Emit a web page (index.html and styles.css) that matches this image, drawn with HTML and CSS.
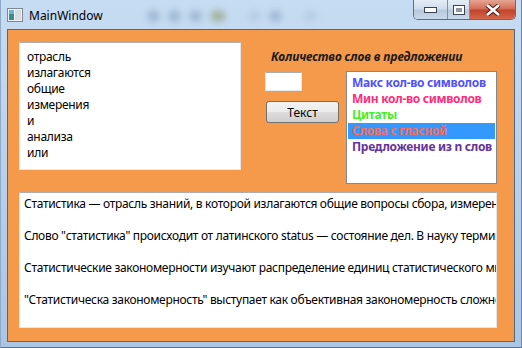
FILE: index.html
```html
<!DOCTYPE html>
<html lang="ru">
<head>
  <meta charset="UTF-8" />
  <title>MainWindow</title>
  <link rel="stylesheet" href="styles.css">
</head>
<body>

  <div class="window">
    <div class="titlebar">
      <svg class="app-icon" width="16" height="14" viewBox="0 0 16 14">
        <rect x="0.5" y="0.5" width="15" height="13" fill="#eef2f6" stroke="#7d8894"/>
        <rect x="2" y="2" width="5" height="10" fill="#3f8a8e"/>
        <rect x="2" y="2" width="5" height="4" fill="#6fb2c9"/>
        <rect x="8" y="2" width="6" height="10" fill="#d9dde2"/>
      </svg>
      <span class="title">MainWindow</span>
      <div class="glass">
        <span class="blob"></span>
        <span class="blob"></span>
        <span class="blob"></span>
        <span class="blob green"></span>
        <span class="blob light"></span>
        <span class="blob"></span>
        <span class="blob light"></span>
      </div>
      <div class="caption">
        <div class="cap-btn">
          <svg width="13" height="6" viewBox="0 0 13 6"><rect x="0.5" y="0.5" width="12" height="5" fill="#fff" stroke="#3b4655"/></svg>
        </div>
        <div class="cap-btn">
          <svg width="12" height="10" viewBox="0 0 12 10"><rect x="0.5" y="0.5" width="11" height="9" fill="#fff" stroke="#3b4655"/><rect x="3" y="3" width="6" height="4" fill="#8c97a5"/></svg>
        </div>
        <div class="cap-btn close">
          <svg width="16" height="12" viewBox="0 0 16 12"><path d="M2 1 L14 11 M14 1 L2 11" stroke="#4a1a12" stroke-width="4.5"/><path d="M2 1 L14 11 M14 1 L2 11" stroke="#fff" stroke-width="2.6"/></svg>
        </div>
      </div>
    </div>

    <div class="client">
      <div class="top">
        <div class="textbox words">отрасль
излагаются
общие
измерения
и
анализа
или</div>

        <div class="side">
          <div class="label">Количество слов в предложении</div>
          <div class="side-row">
            <div class="controls">
              <div class="input"></div>
              <button class="btn">Текст</button>
            </div>
            <ul class="listbox">
              <li class="blue">Макс кол-во символов</li>
              <li class="pink">Мин кол-во символов</li>
              <li class="green">Цитаты</li>
              <li class="salmon selected">Слова с гласной</li>
              <li class="purple">Предложение из n слов</li>
            </ul>
          </div>
        </div>
      </div>

      <div class="textbox text">Статистика — отрасль знаний, в которой излагаются общие вопросы сбора, измерения и анализа массовых статистических данных.

Слово "статистика" происходит от латинского status — состояние дел. В науку термин ввёл немецкий учёный Готфрид Ахенвалль.

Статистические закономерности изучают распределение единиц статистического множества по отдельным признакам.

"Статистическа закономерность" выступает как объективная закономерность сложного массового явления.</div>
    </div>
  </div>

</body>
</html>
```

FILE: styles.css
```css
body {
  margin: 0;
  width: 522px;
  height: 348px;
  overflow: hidden;
  font-family: "Noto Sans", "Open Sans", sans-serif;
  font-size: 12px;
  background: #bcd4ec;
}
.window {
  width: 522px;
  height: 348px;
  box-sizing: border-box;
  padding: 0 6px 5px 6px;
  background: linear-gradient(to bottom, #c6dcf2 0%, #b4cfeb 60%, #a9c6e6 100%);
  border-left: 1px solid #8fa9c6;
  border-right: 1px solid #6f88a6;
  border-bottom: 1px solid #5a7089;
  display: flex;
  flex-direction: column;
}
.titlebar {
  height: 29px;
  flex-shrink: 0;
  display: flex;
  align-items: center;
  position: relative;
  margin-right: -6px;
}
.app-icon {
  margin-top: 1px;
}
.title {
  margin-left: 6px;
  color: #000;
  font-size: 12px;
  margin-top: 1px;
}
.glass {
  display: flex;
  gap: 8px;
  margin-left: 44px;
  margin-top: 2px;
}
.blob {
  width: 13px;
  height: 12px;
  border-radius: 50%;
  background: #8aa4c0;
  filter: blur(3px);
  opacity: 0.6;
}
.blob.green {
  width: 16px;
  background: #8f9c70;
}
.blob.light {
  background: #aec6de;
  margin-left: 14px;
}
.caption {
  position: absolute;
  top: 0;
  right: 5px;
  height: 19px;
  display: flex;
  border: 1px solid #5b6e86;
  border-top: none;
  border-radius: 0 0 5px 5px;
  overflow: hidden;
}
.cap-btn {
  width: 33px;
  height: 19px;
  display: flex;
  align-items: center;
  justify-content: center;
  background: linear-gradient(to bottom, #e4edf7 0%, #cfdcea 48%, #b7c8db 52%, #c9d9ea 100%);
  border-right: 1px solid #7e90a6;
}
.cap-btn:nth-child(2) {
  width: 21px;
}
.cap-btn.close {
  width: 45px;
  border-right: none;
  background: linear-gradient(to bottom, #e6a593 0%, #d46a52 48%, #c0432b 52%, #d5664a 100%);
}
.client {
  flex: 1;
  background: #f59a4b;
  border: 1px solid #55677c;
  padding: 12px 17px 0 11px;
  display: flex;
  flex-direction: column;
  gap: 22px;
}
.top {
  display: flex;
  gap: 24px;
  height: 128px;
}
.textbox {
  box-sizing: border-box;
  background: #fff;
  border: 1px solid #e2e7ee;
  border-top-color: #abadb3;
  white-space: pre;
  overflow: hidden;
  line-height: 16px;
  color: #000;
  letter-spacing: -0.3px;
}
.words {
  width: 222px;
  height: 128px;
  padding: 6px 7px;
}
.side {
  padding-top: 7px;
}
.label {
  margin-left: 6px;
  line-height: 16px;
  font-weight: bold;
  font-style: italic;
  color: #1a1a1a;
  letter-spacing: -0.1px;
}
.side-row {
  display: flex;
  margin-top: 6px;
}
.controls {
  width: 81px;
  display: flex;
  flex-direction: column;
  align-items: flex-start;
}
.input {
  margin-top: 1px;
  width: 37px;
  height: 19px;
  box-sizing: border-box;
  background: #fff;
  border: 1px solid #e2e7ee;
  border-top-color: #abadb3;
}
.btn {
  margin-top: 10px;
  margin-left: 1px;
  width: 73px;
  height: 22px;
  padding: 0;
  border: 1px solid #707070;
  border-radius: 3px;
  background: linear-gradient(to bottom, #f2f2f2 0%, #ebebeb 50%, #dddddd 50%, #cfcfcf 100%);
  font-family: "Noto Sans", "Open Sans", sans-serif;
  font-size: 12px;
  color: #000;
}
.listbox {
  list-style: none;
  margin: 0;
  padding: 3px 1px;
  width: 151px;
  height: 113px;
  box-sizing: border-box;
  background: #fff;
  border: 1px solid #828790;
}
.listbox li {
  height: 16px;
  line-height: 16px;
  padding-left: 4px;
  font-weight: bold;
  white-space: nowrap;
  letter-spacing: -0.3px;
}
.listbox .selected {
  background: #3399ff;
}
.blue { color: #5050ff; }
.pink { color: #ff2d7a; }
.green { color: #44ee22; }
.salmon { color: #ff6a50; }
.purple { color: #663399; }
.text {
  height: 136px;
  padding: 3px 4px;
}
```
